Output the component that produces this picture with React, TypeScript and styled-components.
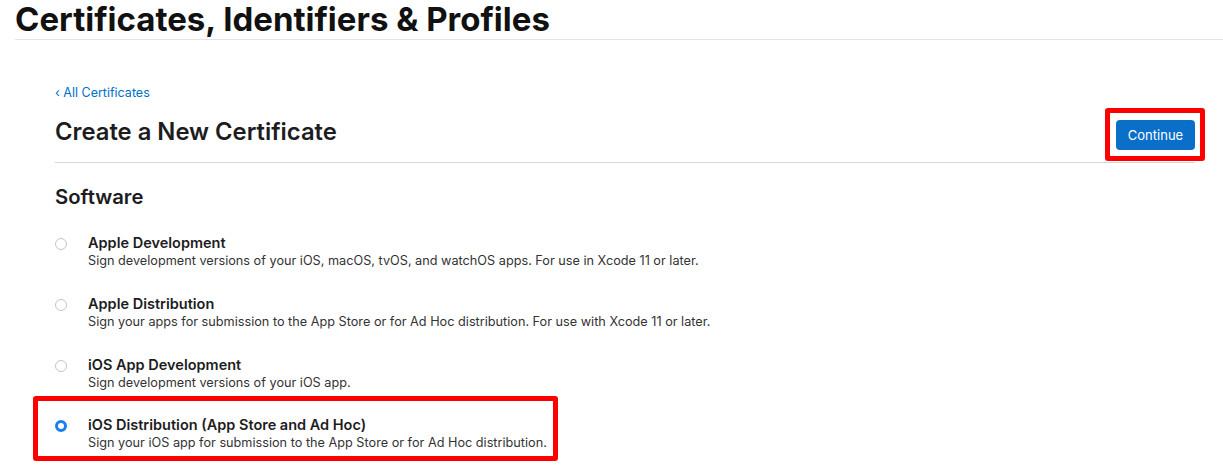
import React from "react";
import styled, { createGlobalStyle } from "styled-components";

const Global = createGlobalStyle`
  html, body { margin: 0; padding: 0; background: #fff; }
  body { font-family: Inter, "Noto Sans", "Liberation Sans", sans-serif; color: #1d1d1f; -webkit-font-smoothing: antialiased; }
`;

const Page = styled.div`
  width: 1223px;
  height: 470px;
  overflow: hidden;
`;

const TopBar = styled.header`
  margin-left: 15px;
  height: 39px;
  border-bottom: 1px solid #e3e3e3;
  display: flex;
  align-items: flex-start;
`;

const SiteTitle = styled.h1`
  margin: 0;
  font-size: 33px;
  font-weight: 700;
  letter-spacing: 0;
  line-height: 38px;
  color: #111;
`;

const Content = styled.main`
  margin: 0 28px 0 55px;
  padding-top: 41px;
`;

const BackLink = styled.a`
  font-size: 12.5px;
  color: #0070c9;
  text-decoration: none;
  display: inline-block;
  line-height: 16px;
`;

const HeadingRow = styled.div`
  display: flex;
  align-items: center;
  justify-content: space-between;
  border-bottom: 1px solid #d6d6d6;
  height: 61px;
`;

const PageHeading = styled.h2`
  margin: -1px 0 0;
  font-size: 23.8px;
  font-weight: 600;
  color: #1d1d1f;
`;

const Highlight = styled.span`
  display: inline-flex;
  border: 5px solid #ff0000;
  border-radius: 3px;
  padding: 7px 5px 6px 6px;
  margin: 5px -10px 0 0;
`;

const ContinueButton = styled.button`
  font-family: inherit;
  font-size: 13px;
  color: #fff;
  background: #0a6fc9;
  border: none;
  border-radius: 4px;
  height: 30px;
  width: 79px;
  padding: 0;
`;

const SectionTitle = styled.h3`
  margin: 22px 0 0;
  font-size: 20.3px;
  font-weight: 600;
  line-height: 24px;
  color: #1d1d1f;
`;

const OptionList = styled.div`
  display: flex;
  flex-direction: column;
  margin-top: 25px;
  gap: 25px;
`;

const Option = styled.label<{ $highlighted?: boolean }>`
  display: flex;
  align-items: flex-start;
  gap: 21px;
  width: fit-content;
  ${(p) =>
    p.$highlighted
      ? `
    border: 5px solid #ff0000;
    border-radius: 3px;
    margin: -21px 0 0 -22px;
    padding: 15px 6px 4px 17px;
  `
      : ""}
`;

const Radio = styled.span<{ $checked?: boolean }>`
  flex: none;
  width: 12px;
  height: 12px;
  box-sizing: border-box;
  border-radius: 50%;
  margin-top: 4px;
  background: #fff;
  border: ${(p) => (p.$checked ? "3.5px solid #1a7ef2" : "1px solid #c4c4c4")};
`;

const OptionText = styled.div`
  display: flex;
  flex-direction: column;
`;

const OptionTitle = styled.div`
  font-size: 14.5px;
  font-weight: 600;
  line-height: 18px;
  color: #1d1d1f;
`;

const OptionDesc = styled.div`
  font-size: 12.7px;
  line-height: 18px;
  color: #333;
`;

const options = [
  {
    title: "Apple Development",
    desc: "Sign development versions of your iOS, macOS, tvOS, and watchOS apps. For use in Xcode 11 or later.",
  },
  {
    title: "Apple Distribution",
    desc: "Sign your apps for submission to the App Store or for Ad Hoc distribution. For use with Xcode 11 or later.",
  },
  {
    title: "iOS App Development",
    desc: "Sign development versions of your iOS app.",
  },
  {
    title: "iOS Distribution (App Store and Ad Hoc)",
    desc: "Sign your iOS app for submission to the App Store or for Ad Hoc distribution.",
    checked: true,
  },
];

export default function App() {
  return (
    <Page>
      <Global />
      <TopBar>
        <SiteTitle>Certificates, Identifiers &amp; Profiles</SiteTitle>
      </TopBar>
      <Content>
        <BackLink href="#">‹ All Certificates</BackLink>
        <HeadingRow>
          <PageHeading>Create a New Certificate</PageHeading>
          <Highlight>
            <ContinueButton>Continue</ContinueButton>
          </Highlight>
        </HeadingRow>
        <SectionTitle>Software</SectionTitle>
        <OptionList>
          {options.map((o) => (
            <Option key={o.title} $highlighted={o.checked}>
              <Radio $checked={o.checked} />
              <OptionText>
                <OptionTitle>{o.title}</OptionTitle>
                <OptionDesc>{o.desc}</OptionDesc>
              </OptionText>
            </Option>
          ))}
        </OptionList>
      </Content>
    </Page>
  );
}
